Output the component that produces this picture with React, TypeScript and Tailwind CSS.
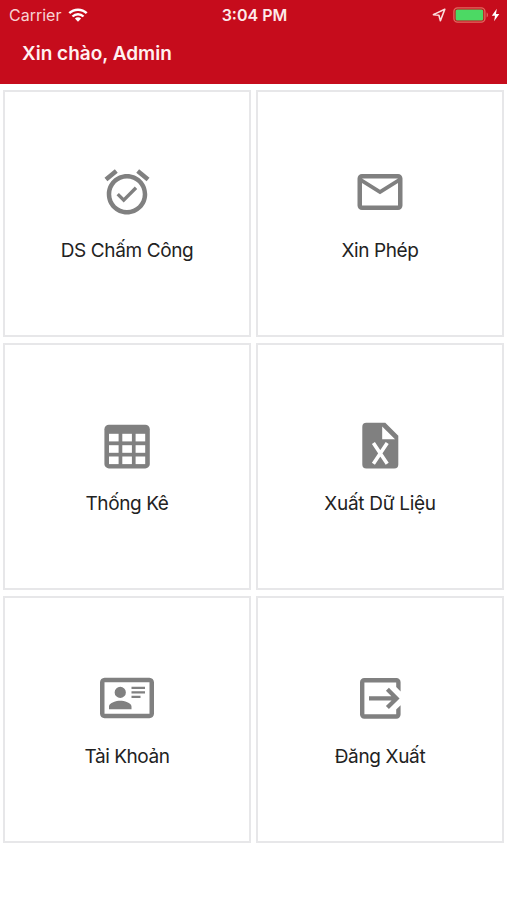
import React from "react";

type MenuItem = {
  label: string;
  tracking: string;
  icon: React.ReactNode;
};

const AlarmIcon = () => (
  <svg viewBox="0 0 24 24" className="w-[54px] h-[54px]" fill="currentColor">
    <path d="M22 5.72l-4.6-3.86-1.29 1.53 4.6 3.86L22 5.72z" />
    <path d="M7.88 3.39L6.6 1.86 2 5.71l1.29 1.53 4.59-3.85z" />
    <path d="M12 4c-4.97 0-9 4.03-9 9s4.02 9 9 9c4.97 0 9-4.03 9-9s-4.03-9-9-9zm0 16c-3.87 0-7-3.13-7-7s3.13-7 7-7 7 3.13 7 7-3.13 7-7 7z" />
    <path d="M10.54 14.53L8.41 12.4l-1.06 1.06 3.18 3.18 6-6-1.06-1.06-4.93 4.95z" />
  </svg>
);

const MailIcon = () => (
  <svg viewBox="0 0 24 24" className="w-[54px] h-[54px]" fill="currentColor">
    <path d="M22 6c0-1.1-.9-2-2-2H4c-1.1 0-2 .9-2 2v12c0 1.1.9 2 2 2h16c1.1 0 2-.9 2-2V6zm-2 0l-8 5-8-5h16zm0 12H4V8l8 5 8-5v10z" />
  </svg>
);

const TableIcon = () => (
  <svg viewBox="0 0 54 54" className="w-[54px] h-[54px]">
    <rect x="4.4" y="6.8" width="45.4" height="43.6" rx="4.5" fill="currentColor" />
    {[15.8, 27.2, 38.5].map((y) =>
      [9, 22.3, 35.6].map((x) => (
        <rect key={`${x}-${y}`} x={x} y={y} width="9.6" height="7.6" fill="#fff" />
      ))
    )}
  </svg>
);

const ExcelIcon = () => (
  <svg viewBox="0 0 54 54" className="w-[54px] h-[54px]">
    <path
      d="M13.3 4.8H32.3L45.3 17.8V46.5a4 4 0 0 1-4 4H13.3a4 4 0 0 1-4-4V8.8a4 4 0 0 1 4-4z"
      fill="currentColor"
    />
    <path d="M29.2 8.4V21.2H42z" fill="#fff" />
    <path d="M20.4 25L34.2 45.8M34.2 25L20.4 45.8" stroke="#fff" strokeWidth="3.6" />
  </svg>
);

const AccountIcon = () => (
  <svg viewBox="0 0 24 24" className="w-[54px] h-[54px]" fill="currentColor">
    <path d="M22,3H2C0.91,3.04 0.04,3.91 0,5V19C0.04,20.09 0.91,20.96 2,21H22C23.09,20.96 23.96,20.09 24,19V5C23.96,3.91 23.09,3.04 22,3M22,19H2V5H22V19M14,17V15.75C14,14.09 10.66,13.25 9,13.25C7.34,13.25 4,14.09 4,15.75V17H14M9,7A2.5,2.5 0 0,0 6.5,9.5A2.5,2.5 0 0,0 9,12A2.5,2.5 0 0,0 11.5,9.5A2.5,2.5 0 0,0 9,7M14,7V8H20V7H14M14,9V10H20V9H14M14,11V12H18V11H14" />
  </svg>
);

const ExitIcon = () => (
  <svg viewBox="0 0 54 54" className="w-[54px] h-[54px]">
    <path
      d="M47.6 20.4V11.2a4.2 4.2 0 0 0-4.2-4.2H11.2A4.2 4.2 0 0 0 7 11.2V43.5a4.2 4.2 0 0 0 4.2 4.2H43.4a4.2 4.2 0 0 0 4.2-4.2V34.2L43.2 38.6V43.3H11.4V11.4H43.2V16z"
      fill="currentColor"
    />
    <path
      d="M16 27.4H43M34.4 18.2L43.6 27.4L34.4 36.6"
      fill="none"
      stroke="currentColor"
      strokeWidth="4.2"
    />
  </svg>
);

const items: MenuItem[] = [
  { label: "DS Chấm Công", tracking: "tracking-[-0.38px]", icon: <AlarmIcon /> },
  { label: "Xin Phép", tracking: "tracking-[-0.4px]", icon: <MailIcon /> },
  { label: "Thống Kê", tracking: "tracking-[-0.4px]", icon: <TableIcon /> },
  { label: "Xuất Dữ Liệu", tracking: "tracking-[-0.3px]", icon: <ExcelIcon /> },
  { label: "Tài Khoản", tracking: "tracking-[-0.45px]", icon: <AccountIcon /> },
  { label: "Đăng Xuất", tracking: "tracking-[-0.35px]", icon: <ExitIcon /> },
];

const StatusBar = () => (
  <div className="grid grid-cols-[1fr_auto_1fr] items-center h-[30px] px-[7px]">
    <div className="flex items-center gap-[7px] pl-[2px]">
      <span className="text-[16px] leading-[20px] text-[#f8d3d3]">Carrier</span>
      <svg viewBox="0 0 20 14" className="w-5 h-[14px]" fill="none" stroke="#fff">
        <path d="M1.3 5.2a12.4 12.4 0 0 1 17.4 0" strokeWidth="2.5" />
        <path d="M4.5 8.5a7.8 7.8 0 0 1 11 0" strokeWidth="2.4" />
        <path d="M6.9 10.6a4.4 4.4 0 0 1 6.2 0L10 13.7z" fill="#fff" stroke="none" />
      </svg>
    </div>
    <span className="pl-[2px] text-[16px] leading-[20px] font-semibold text-[#fdeaea]">3:04 PM</span>
    <div className="flex items-center justify-end">
      <svg viewBox="0 0 14 14" className="w-[14px] h-[14px] mr-[7px]" fill="none">
        <path d="M12.8 1.2L1.4 6.6L6.9 7.2L8.4 12.8z" stroke="#fbdcdc" strokeWidth="1.6" strokeLinejoin="round" />
      </svg>
      <svg viewBox="0 0 36 16" className="w-9 h-4 mr-[2px]">
        <rect x="0.9" y="0.8" width="31" height="14.4" rx="3.6" fill="none" stroke="#e0695f" strokeWidth="1.3" />
        <rect x="2.6" y="2.5" width="27.6" height="11" rx="1.6" fill="#4cd964" />
        <path d="M33.6 5.6c1.8.6 1.8 4.2 0 4.8z" fill="#e0695f" />
      </svg>
      <svg viewBox="0 0 9 14" className="w-[9px] h-[14px]">
        <path d="M5.8 0.8L0.8 7.8H4L3.1 13.2L8.3 5.9H5z" fill="#fff" />
      </svg>
    </div>
  </div>
);

const MenuCard: React.FC<{ item: MenuItem }> = ({ item }) => (
  <button className="flex flex-col items-center h-[247px] pt-[73px] bg-white border-2 border-[#e7e7e9] text-[#808080]">
    {item.icon}
    <span className={`mt-[20px] text-[19px] leading-6 text-[#222] whitespace-nowrap ${item.tracking}`}>
      {item.label}
    </span>
  </button>
);

export default function App() {
  return (
    <div className="h-[900px] w-full bg-white overflow-hidden font-['Inter','Noto_Sans',sans-serif]">
      <header className="h-[84px] bg-[#c60c1c]">
        <StatusBar />
        <h1 className="pl-[22px] pt-[12px] text-[19px] leading-6 font-semibold text-[#fff1f1]">Xin chào, Admin</h1>
      </header>
      <main className="grid grid-cols-2 gap-x-[5px] gap-y-[5.8px] pt-[6px] px-[3px]">
        {items.map((item) => (
          <MenuCard key={item.label} item={item} />
        ))}
      </main>
    </div>
  );
}
